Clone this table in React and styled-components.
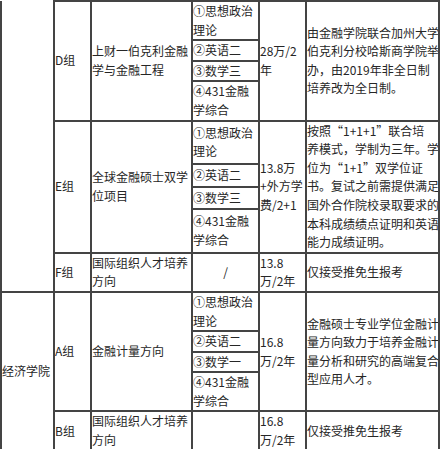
import React from 'react'
import styled, { createGlobalStyle } from 'styled-components'

const GlobalStyle = createGlobalStyle`
  html, body { margin: 0; padding: 0; background: #fff; }
  body {
    font-family: "Microsoft YaHei", "Noto Sans CJK SC", "Noto Sans", sans-serif;
    font-size: 12px;
    color: #262626;
  }
`

const Table = styled.table`
  border-collapse: collapse;
  table-layout: fixed;
  width: 440px;
  line-height: 18.6px;
`

const Col = styled.col`
  width: ${(p) => p.$w}px;
`

const Cell = styled.td`
  border: 2px solid #444;
  border-top-style: ${(p) => (p.$noTop ? 'none' : 'solid')};
  padding: 0;
  vertical-align: middle;
  text-align: ${(p) => (p.$center ? 'center' : 'left')};
  white-space: nowrap;
  overflow: hidden;
`

const colWidths = [53, 37, 101, 67, 47, 133]

const lines = (arr) =>
  arr.map((t, i) => (
    <React.Fragment key={i}>
      {i > 0 && <br />}
      {t}
    </React.Fragment>
  ))

const groups = [
  {
    school: '',
    noTop: true,
    rows: [
      {
        group: 'D组',
        name: ['上财一伯克利金融', '学与金融工程'],
        subjects: [['①思想政治', '理论'], ['②英语二'], ['③数学三'], ['④431金融', '学综合']],
        fee: ['28万/2', '年'],
        note: ['由金融学院联合加州大学', '伯克利分校哈斯商学院举', '办，由2019年非全日制', '培养改为全日制。'],
      },
      {
        group: 'E组',
        name: ['全球金融硕士双学', '位项目'],
        subjects: [['①思想政治', '理论'], ['②英语二'], ['③数学三'], ['④431金融', '学综合']],
        fee: ['13.8万', '+外方学', '费/2+1'],
        note: [
          '按照“1+1+1”联合培',
          '养模式，学制为三年。学',
          '位为“1+1”双学位证',
          '书。复试之前需提供满足',
          '国外合作院校录取要求的',
          '本科成绩绩点证明和英语',
          '能力成绩证明。',
        ],
      },
      {
        group: 'F组',
        name: ['国际组织人才培养', '方向'],
        single: '/',
        fee: ['13.8', '万/2年'],
        note: ['仅接受推免生报考'],
      },
    ],
  },
  {
    school: '经济学院',
    rows: [
      {
        group: 'A组',
        name: ['金融计量方向'],
        subjects: [['①思想政治', '理论'], ['②英语二'], ['③数学一'], ['④431金融', '学综合']],
        fee: ['16.8', '万/2年'],
        note: ['金融硕士专业学位金融计', '量方向致力于培养金融计', '量分析和研究的高端复合', '型应用人才。'],
      },
      {
        group: 'B组',
        name: ['国际组织人才培养', '方向'],
        single: '',
        fee: ['16.8', '万/2年'],
        note: ['仅接受推免生报考'],
      },
    ],
  },
]

const buildRows = () => {
  const out = []
  groups.forEach((g, gi) => {
    const span = g.rows.reduce((n, r) => n + (r.subjects ? r.subjects.length : 1), 0)
    let first = true
    g.rows.forEach((r, ri) => {
      const n = r.subjects ? r.subjects.length : 1
      const subj = r.subjects || [[r.single]]
      subj.forEach((s, si) => {
        out.push(
          <tr key={`${gi}-${ri}-${si}`}>
            {first && (
              <Cell rowSpan={span} $noTop={g.noTop}>
                {g.school}
              </Cell>
            )}
            {si === 0 && <Cell rowSpan={n}>{r.group}</Cell>}
            {si === 0 && <Cell rowSpan={n}>{lines(r.name)}</Cell>}
            <Cell $center={!r.subjects}>{lines(s)}</Cell>
            {si === 0 && <Cell rowSpan={n}>{lines(r.fee)}</Cell>}
            {si === 0 && <Cell rowSpan={n}>{lines(r.note)}</Cell>}
          </tr>
        )
        first = false
      })
    })
  })
  return out
}

export default function App() {
  return (
    <>
      <GlobalStyle />
      <Table>
        <colgroup>
          {colWidths.map((w, i) => (
            <Col key={i} $w={w} />
          ))}
        </colgroup>
        <tbody>{buildRows()}</tbody>
      </Table>
    </>
  )
}
